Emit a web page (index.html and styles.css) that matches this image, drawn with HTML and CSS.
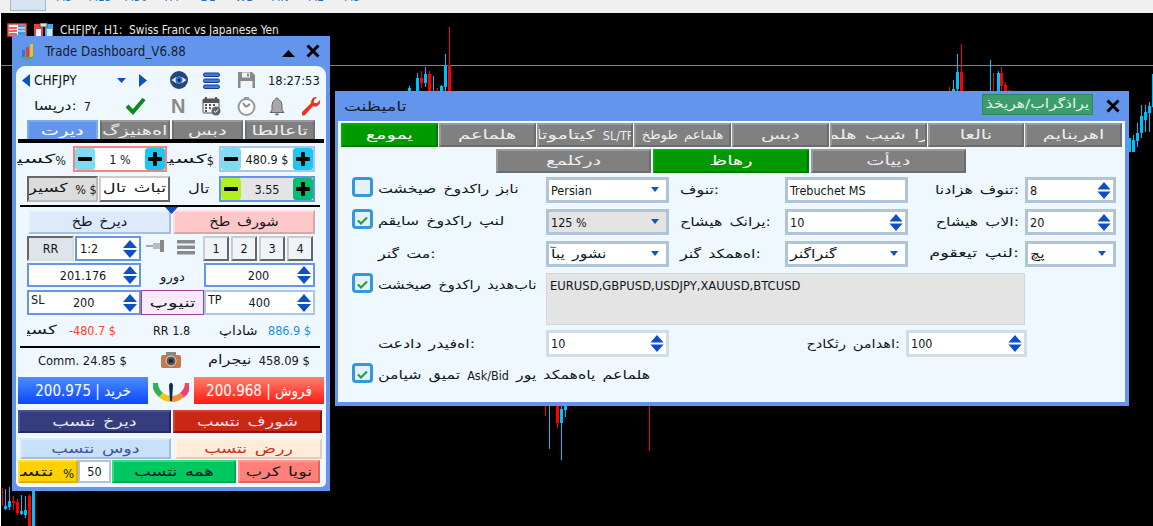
FILE: index.html
```html
<!DOCTYPE html>
<html lang="fa">
<head>
<meta charset="utf-8">
<title>Trade Dashboard</title>
<link rel="stylesheet" href="styles.css">
</head>
<body>
<svg class="defs" width="0" height="0">
  <symbol id="spin" viewBox="0 0 14 18"><path d="M7 0L14 8H0zM0 10H14L7 18z"/></symbol>
  <symbol id="minus" viewBox="0 0 20 22"><rect x="3" y="9" width="14" height="4" rx="1"/></symbol>
  <symbol id="plus" viewBox="0 0 20 22"><rect x="3" y="9" width="14" height="4" rx="1"/><rect x="8" y="4" width="4" height="14" rx="1"/></symbol>
  <symbol id="tick" viewBox="0 0 20 20"><path d="M4 10l4 4 8-8" fill="none" stroke="#2a9d3f" stroke-width="3"/></symbol>
</svg>
<div class="toolbar">
  <span class="tf active">H1</span><span class="tf">M5</span><span class="tf">M15</span><span class="tf">M30</span><span class="tf">H4</span><span class="tf">D1</span><span class="tf">W1</span><span class="tf">MN</span><span class="tf">M2</span><span class="tf">M3</span>
</div>
<main class="chart">
  <svg class="candles" width="1153" height="511" viewBox="0 15 1153 511">
    <rect x="1" y="65" width="1152" height="1" fill="#808080"/>
    <g fill="#00bfff">
      <rect x="409" y="86" width="1" height="5"/><rect x="408" y="88" width="3" height="3"/>
      <rect x="417" y="73" width="1" height="18"/><rect x="416" y="78" width="3" height="13"/>
      <rect x="425" y="67" width="1" height="20"/><rect x="424" y="74" width="3" height="9"/>
      <rect x="433" y="76" width="1" height="15"/>
      <rect x="441" y="85" width="1" height="6"/><rect x="440" y="86" width="3" height="5"/>
      <rect x="445" y="54" width="1" height="37"/><rect x="444" y="65" width="3" height="22"/>
      <rect x="953" y="80" width="1" height="11"/><rect x="952" y="89" width="3" height="2"/>
      <rect x="957" y="54" width="1" height="37"/><rect x="956" y="72" width="3" height="17"/>
      <rect x="990" y="60" width="1" height="31"/>
      <rect x="998" y="71" width="1" height="20"/><rect x="997" y="73" width="3" height="18"/>
      <rect x="1129" y="138" width="2" height="14"/>
      <rect x="1133" y="135" width="1" height="15"/><rect x="1132" y="140" width="3" height="12"/>
      <rect x="1137" y="123" width="1" height="24"/><rect x="1136" y="133" width="3" height="8"/>
      <rect x="1141" y="105" width="1" height="33"/><rect x="1140" y="116" width="3" height="17"/>
      <rect x="1145" y="105" width="1" height="27"/><rect x="1144" y="112" width="3" height="8"/>
      <rect x="1149" y="102" width="1" height="30"/><rect x="1148" y="106" width="3" height="7"/>
      <rect x="1152" y="74" width="1" height="33"/>
      <rect x="549" y="406" width="1" height="43"/>
      <rect x="561" y="406" width="1" height="54"/><rect x="560" y="409" width="3" height="14"/>
      <rect x="565" y="406" width="1" height="11"/><rect x="564" y="406" width="3" height="4"/>
      <rect x="5" y="489" width="1" height="21"/><rect x="4" y="506" width="3" height="3"/>
      <rect x="9" y="487" width="1" height="23"/><rect x="8" y="501" width="3" height="6"/>
      <rect x="21" y="495" width="1" height="20"/><rect x="20" y="511" width="3" height="3"/>
      <rect x="25" y="496" width="1" height="22"/><rect x="24" y="510" width="3" height="5"/>
      <rect x="32" y="491" width="3" height="35"/>
    </g>
    <g fill="#ff0000">
      <rect x="421" y="71" width="1" height="17"/><rect x="420" y="78" width="3" height="5"/>
      <rect x="429" y="71" width="1" height="20"/><rect x="428" y="74" width="3" height="17"/>
      <rect x="437" y="88" width="1" height="3"/>
      <rect x="449" y="27" width="1" height="64"/><rect x="448" y="65" width="3" height="26"/>
      <rect x="949" y="87" width="1" height="4"/>
      <rect x="961" y="44" width="1" height="47"/><rect x="960" y="72" width="3" height="19"/>
      <rect x="993" y="73" width="1" height="18"/>
      <rect x="1001" y="67" width="1" height="24"/><rect x="1000" y="73" width="3" height="13"/>
      <rect x="1005" y="82" width="1" height="9"/><rect x="1004" y="85" width="3" height="6"/>
      <rect x="1009" y="90" width="1" height="1"/>
      <rect x="545" y="406" width="1" height="10"/>
      <rect x="557" y="406" width="1" height="22"/><rect x="556" y="406" width="3" height="17"/>
      <rect x="649" y="406" width="1" height="45"/>
      <rect x="2" y="488" width="1" height="18"/>
      <rect x="13" y="496" width="1" height="14"/><rect x="12" y="501" width="3" height="2"/>
      <rect x="17" y="499" width="1" height="16"/><rect x="16" y="502" width="3" height="11"/>
      <rect x="29" y="494" width="1" height="32"/><rect x="28" y="496" width="3" height="30"/>
    </g>
  </svg>

  <div class="chart-title">
    <svg class="ct-icon" width="20" height="14" viewBox="0 0 20 14"><rect x="1" y="1" width="18" height="12" fill="#fff" stroke="#e04040" stroke-width="1.5"/><path d="M2 5h8M2 8h8M2 11h8" stroke="#f06060" stroke-width="2"/><rect x="11" y="2" width="7" height="10" fill="#3a9ae0"/><path d="M11 5h7M11 8h7" stroke="#fff"/></svg>
    <svg class="ct-icon" width="19" height="15" viewBox="0 0 19 15"><rect x="0" y="1" width="9" height="13" fill="#e84040"/><rect x="2" y="6" width="5" height="7" fill="#fff"/><rect x="11" y="1" width="8" height="13" fill="#4aa8e8"/><rect x="13" y="6" width="5" height="7" fill="#cfe8fa"/><rect x="6" y="0" width="7" height="4" fill="#ddd" stroke="#555"/></svg>
    <span class="ct-text">CHFJPY, H1:&nbsp; Swiss Franc vs Japanese Yen</span>
  </div>

  <section class="panel">
    <header class="p-head">
      <svg class="p-logo" width="20" height="18" viewBox="0 0 20 18"><rect x="4" y="8" width="3" height="7" fill="#3a70d0"/><rect x="8" y="5" width="3" height="10" fill="#e04030"/><rect x="12" y="2" width="3" height="13" fill="#f0c020"/><path d="M1 14q8 5 17-1q-6 6-12 4t-5-3z" fill="#40b040"/></svg>
      <span class="p-title">Trade Dashboard_V6.88</span>
      <svg class="p-min" width="13" height="7" viewBox="0 0 13 7"><path d="M6.500 0L13 7H0z"/></svg>
      <svg class="p-close" width="14" height="14" viewBox="0 0 14 14"><path d="M1.500 1.500l11 11M12.500 1.500l-11 11" stroke="#000" stroke-width="3"/></svg>
    </header>
    <div class="p-body">
      <div class="r-sym">
        <svg width="8" height="13" viewBox="0 0 8 13"><path d="M8 0V13L0 6.500z" fill="#0c50c8"/></svg>
        <span class="sym">CHFJPY</span>
        <svg width="9" height="5" viewBox="0 0 9 5"><path d="M0 0H9L4.500 5z" fill="#0c50c8"/></svg>
        <svg width="8" height="13" viewBox="0 0 8 13"><path d="M0 0V13L8 6.500z" fill="#0c50c8"/></svg>
        <svg width="18" height="18" viewBox="0 0 18 18"><circle cx="9" cy="9" r="9" fill="#27457a"/><path d="M1.500 9q7.500-7 15 0q-7.500 7-15 0z" fill="#dfe9f5"/><circle cx="9" cy="9" r="3.500" fill="#2a72c8"/><circle cx="9" cy="9" r="1.500" fill="#0a2040"/></svg>
        <svg width="17" height="17" viewBox="0 0 17 17"><g fill="#3a80d8" stroke="#1a3a90"><rect x=".5" y="1" width="16" height="3.500" rx="1.500"/><rect x=".5" y="7" width="16" height="3.500" rx="1.500"/><rect x=".5" y="13" width="16" height="3.500" rx="1.500"/></g></svg>
        <svg width="19" height="18" viewBox="0 0 19 18"><path d="M1 1H15L18 4V17H1z" fill="#8a8a8a"/><rect x="5" y="1.500" width="8" height="5" fill="#f0f4f8"/><rect x="10" y="2.500" width="2" height="3" fill="#8a8a8a"/><rect x="3.500" y="10" width="12" height="7" fill="#f0f4f8"/></svg>
        <span class="time">18:27:53</span>
      </div>
      <div class="r-tools">
        <span class="spread"><span class="fa">اسپرد: <span class="la">7</span></span></span>
        <svg width="21" height="18" viewBox="0 0 21 18"><path d="M2 9l6 6L19 2" fill="none" stroke="#0d8a1d" stroke-width="4"/></svg>
        <span class="n-icon">N</span>
        <svg width="19" height="19" viewBox="0 0 19 19"><rect x="1" y="2" width="16" height="14" rx="1" fill="#f4f4f4" stroke="#555"/><rect x="1" y="2" width="16" height="4" fill="#555"/><path d="M4 0v4M14 0v4" stroke="#555" stroke-width="2"/><path d="M3 8h2M7 8h2M11 8h2M3 11h2M7 11h2M3 14h2" stroke="#555" stroke-width="2"/><circle cx="14" cy="14" r="4.500" fill="#666"/><path d="M12 14l1.500 1.500 2.500-3" fill="none" stroke="#fff"/></svg>
        <svg width="19" height="19" viewBox="0 0 19 19"><circle cx="9.500" cy="10" r="8" fill="#fafafa" stroke="#999" stroke-width="2"/><path d="M9 10l-3-4M9 10l4-3" stroke="#888" stroke-width="2"/><path d="M7 0h5v2H7z" fill="#999"/></svg>
        <svg width="16" height="19" viewBox="0 0 16 19"><path d="M8 1q1.500 0 1.500 1.500Q13 4 13 8v5l2 2.500H1L3 13V8q0-4 3.500-5.500Q6.500 1 8 1z" fill="#a8a8a8" stroke="#666"/><path d="M6 16.500a2 2 0 0 0 4 0z" fill="#666"/></svg>
        <svg width="20" height="20" viewBox="0 0 20 20"><path d="M1 16L10 7Q10 2 14 1L16 1 13 4 13 7 16 7 19 4Q20 8 16 10 14 11 12 10L4 19Q2 20 1 19z" fill="#f03020"/></svg>
      </div>
      <div class="tabs">
        <div class="tab on"><span class="fa">ترید</span></div><div class="tab"><span class="fa">گزینه‌ها</span></div><div class="tab"><span class="fa">سبد</span></div><div class="tab"><span class="fa">اطلاعات</span></div>
      </div>
      <div class="rule thick"></div>
      <div class="r-risk">
        <div class="lbl-clip"><span class="fa">ریسک<span class="la">%</span></span></div>
        <div class="stepper red-b">
          <div class="pm c1"><svg width="20" height="22"><use href="#minus"/></svg></div><span class="val">1 %</span><div class="pm c2"><svg width="20" height="22"><use href="#plus"/></svg></div>
        </div>
        <div class="lbl-clip"><span class="fa">ریسک<span class="la">$</span></span></div>
        <div class="stepper light-b">
          <div class="pm c1"><svg width="20" height="22"><use href="#minus"/></svg></div><span class="val">480.9 $</span><div class="pm c2"><svg width="20" height="22"><use href="#plus"/></svg></div>
        </div>
      </div>
      <div class="r-lot">
        <div class="mode sunk"><span class="fa">ریسک <span class="la">% $</span></span></div>
        <div class="mode raised"><span class="fa">لات ثابت</span></div>
        <div class="lot-lbl"><span class="fa">لات</span></div>
        <div class="stepper blue-b gray">
          <div class="pm c3"><svg width="20" height="22"><use href="#minus"/></svg></div><span class="val">3.55</span><div class="pm c4"><svg width="20" height="22"><use href="#plus"/></svg></div>
        </div>
      </div>
      <div class="rule mid-rule"><svg class="notch" width="13" height="7" viewBox="0 0 13 7"><path d="M0 0H13L6.500 7z" fill="#0c50c8"/></svg></div>
      <div class="r-lines">
        <div class="line-b buy-l"><span class="fa">خط خرید</span></div>
        <div class="line-b sell-l"><span class="fa">خط فروش</span></div>
      </div>
      <div class="r-rr">
        <div class="rr-b">RR</div>
        <div class="spin blue-b"><span class="val-l">1:2</span><svg class="sa" width="14" height="18"><use href="#spin"/></svg></div>
        <svg class="pin" width="19" height="12" viewBox="0 0 19 12"><path d="M0 6h8" stroke="#aaa" stroke-width="2"/><path d="M7 3h7v6H7z" fill="#bbb"/><rect x="14" y="0" width="4" height="12" fill="#888"/></svg>
        <svg class="menu" width="18" height="15" viewBox="0 0 18 15"><rect width="18" height="3.500" fill="#8a8a8a"/><rect y="5.500" width="18" height="3.500" fill="#8a8a8a"/><rect y="11" width="18" height="3.500" fill="#8a8a8a"/></svg>
        <div class="nums"><div class="num">1</div><div class="num">2</div><div class="num">3</div><div class="num">4</div></div>
      </div>
      <div class="r-entry">
        <div class="spin blue-b"><span class="val-c">201.176</span><svg class="sa" width="14" height="18"><use href="#spin"/></svg></div>
        <div class="entry-lbl"><span class="fa">ورود</span></div>
        <div class="spin blue-b"><span class="val-c">200</span><svg class="sa" width="14" height="18"><use href="#spin"/></svg></div>
      </div>
      <div class="r-sltp">
        <div class="spin blue-b"><span class="tag">SL</span><span class="val-n">200</span><svg class="sa" width="14" height="18"><use href="#spin"/></svg></div>
        <div class="point"><span class="fa">پوینت</span></div>
        <div class="spin light-b"><span class="tag">TP</span><span class="val-n">400</span><svg class="sa" width="14" height="18"><use href="#spin"/></svg></div>
      </div>
      <div class="r-sum">
        <div class="sum-risk"><span class="fa">ریسک</span></div>
        <span class="loss">-480.7 $</span>
        <span>RR 1.8</span>
        <span class="fa">پاداش</span>
        <span class="gain">886.9 $</span>
      </div>
      <div class="rule mid-rule low"></div>
      <div class="r-comm">
        <span>Comm. 24.85 $</span>
        <svg width="20" height="16" viewBox="0 0 20 16"><rect y="3" width="20" height="13" rx="2" fill="#c87848"/><rect x="5" y="0" width="10" height="4" fill="#888"/><circle cx="10" cy="9" r="5" fill="#555" stroke="#ddd"/><circle cx="10" cy="9" r="2" fill="#222"/></svg>
        <span class="fa">مارجین <span class="la">458.09 $</span></span>
      </div>
      <div class="r-trade">
        <div class="trade buy" dir="rtl">خرید | 200.975</div>
        <svg class="gauge" width="36" height="22" viewBox="0 0 36 22"><path d="M2 3A16 16 0 0 0 8 15" fill="none" stroke="#35b050" stroke-width="6"/><path d="M8 15A16 16 0 0 0 18 19" fill="none" stroke="#ecc818" stroke-width="6"/><path d="M18 19A16 16 0 0 0 29 15" fill="none" stroke="#f09030" stroke-width="6"/><path d="M29 15A16 16 0 0 0 35 3" fill="none" stroke="#f04070" stroke-width="6"/><path d="M16 5q2-5 4 0l-1 16h-2z" fill="#0c2a50"/></svg>
        <div class="trade sell" dir="rtl">فروش | 200.968</div>
      </div>
      <div class="r-close1">
        <div class="cl navy"><span class="fa">بستن خرید</span></div>
        <div class="cl crim"><span class="fa">بستن فروش</span></div>
      </div>
      <div class="r-close2">
        <div class="cl sky"><span class="fa">بستن سود</span></div>
        <div class="cl peach"><span class="fa">بستن ضرر</span></div>
      </div>
      <div class="r-close3">
        <div class="cl gold"><span class="fa">بستن <span class="la">%</span></span></div>
        <div class="pct">50</div>
        <div class="cl green"><span class="fa">بستن همه</span></div>
        <div class="cl salmon"><span class="fa">برک ایون</span></div>
      </div>
    </div>
  </section>

  <section class="settings">
    <header class="s-head">
      <span class="s-title fa">تنظیمات</span>
      <div class="s-save"><span class="fa">ذخیره/بارگذاری</span></div>
      <svg class="s-close" width="14" height="14" viewBox="0 0 14 14"><path d="M1.500 1.500l11 11M12.500 1.500l-11 11" stroke="#000" stroke-width="3"/></svg>
    </header>
    <div class="s-body">
      <div class="s-tabs8">
        <div class="stab on"><span class="fa">عمومی</span></div>
        <div class="stab"><span class="fa">معامله</span></div>
        <div class="stab"><span class="fa">اتوماتیک <span class="la">SL/TP</span></span></div>
        <div class="stab"><span class="fa tight">خطوط معامله</span></div>
        <div class="stab"><span class="fa">سبد</span></div>
        <div class="stab"><span class="fa">معامله بیش از حد</span></div>
        <div class="stab"><span class="fa">اعلان</span></div>
        <div class="stab"><span class="fa">میانبرها</span></div>
      </div>
      <div class="s-tabs3">
        <div class="stab"><span class="fa">عملکرد</span></div>
        <div class="stab on"><span class="fa">ظاهر</span></div>
        <div class="stab"><span class="fa">تأیید</span></div>
      </div>
      <div class="f-row">
        <label class="chk"><span class="box"></span><span class="fa">تشخیص خودکار زبان</span></label>
        <div class="ctl sel">Persian<i class="arr"></i></div>
        <div class="l2"><span class="fa">فونت:</span></div>
        <div class="ctl">Trebuchet MS</div>
        <div class="l3"><span class="fa">اندازه فونت:</span></div>
        <div class="ctl sp">8<svg class="sa2" width="14" height="17"><use href="#spin"/></svg></div>
      </div>
      <div class="f-row">
        <label class="chk"><span class="box"><svg width="17" height="17"><use href="#tick"/></svg></span><span class="fa">مقیاس خودکار پنل</span></label>
        <div class="ctl sel dis">125 %<i class="arr"></i></div>
        <div class="l2"><span class="fa">حاشیه کناری:</span></div>
        <div class="ctl sp">10<svg class="sa2" width="14" height="17"><use href="#spin"/></svg></div>
        <div class="l3"><span class="fa">حاشیه بالا:</span></div>
        <div class="ctl sp">20<svg class="sa2" width="14" height="17"><use href="#spin"/></svg></div>
      </div>
      <div class="f-row">
        <div class="plain"><span class="fa">رنگ تم:</span></div>
        <div class="ctl sel"><span class="fa">آبی روشن</span><i class="arr"></i></div>
        <div class="l2"><span class="fa">رنگ دکمه‌ها:</span></div>
        <div class="ctl sel"><span class="fa">رنگارنگ</span><i class="arr"></i></div>
        <div class="l3"><span class="fa wide">موقعیت پنل:</span></div>
        <div class="ctl sel"><span class="fa">چپ</span><i class="arr"></i></div>
      </div>
      <div class="f-row tall">
        <label class="chk"><span class="box"><svg width="17" height="17"><use href="#tick"/></svg></span><span class="fa narrow">تشخیص خودکار دیده‌بان</span></label>
        <div class="area">EURUSD,GBPUSD,USDJPY,XAUUSD,BTCUSD</div>
      </div>
      <div class="f-row2">
        <div class="plain"><span class="fa">تعداد ردیف‌ها:</span></div>
        <div class="ctl sp soft">10<svg class="sa2" width="14" height="17"><use href="#spin"/></svg></div>
        <div class="l4"><span class="fa narrow">حداکثر نمادها:</span></div>
        <div class="ctl sp soft">100<svg class="sa2" width="14" height="17"><use href="#spin"/></svg></div>
      </div>
      <label class="chk last"><span class="box"><svg width="17" height="17"><use href="#tick"/></svg></span><span class="fa">نمایش قیمت <span class="la">Ask/Bid</span> روی دکمه‌های معامله</span></label>
    </div>
  </section>
</main>
</body>
</html>
```
FILE: styles.css
```css
* { box-sizing: border-box; }
html, body { margin: 0; height: 100%; }
body {
  width: 1153px; height: 526px; overflow: hidden; background: #000;
  font-family: "DejaVu Sans Condensed", "DejaVu Sans", sans-serif;
  font-size: 12px; color: #101820;
  display: flex; flex-direction: column;
}
/* The source draws Persian strictly left-to-right with wide, low letters. */
.fa {
  --s: 1.27;
  direction: ltr; unicode-bidi: bidi-override; white-space: nowrap; flex: none;
  font-family: "DejaVu Sans", sans-serif; line-height: 1.2; word-spacing: 2px;
  font-size: calc(1em * var(--s));
  transform: scaleY(calc(1 / var(--s)));
}
.la {
  display: inline-block; word-spacing: 0;
  font-family: "DejaVu Sans Condensed", "DejaVu Sans", sans-serif;
  font-size: calc(1em / var(--s));
  transform: scaleY(var(--s));
}
.fa.wide { --s: 1.42; }
.fa.narrow { --s: 1.17; }
.defs { position: absolute; }

.toolbar { height: 13px; flex: none; background: #f0f0f0; display: flex; padding-left: 10px; overflow: hidden; }
.tf { width: 36px; height: 11px; display: flex; align-items: flex-end; justify-content: center; color: #1e70c0; font-size: 12px; line-height: 1; padding-bottom: 8px; }
.tf.active { background: #d6e4f2; border: solid #a8b8c8; border-width: 0 1px 1px; }

.chart { position: relative; flex: 1; background: #000; border-left: 1px solid #fff; }
.candles { position: absolute; left: -1px; top: 2px; }
.chart-title { position: absolute; left: 6px; top: 10px; height: 14px; display: flex; align-items: center; gap: 7px; color: #e8e8e8; }
.ct-text { white-space: nowrap; font-size: 11.800px; }

/* Trade panel */
.panel { position: absolute; left: 11px; top: 23px; width: 318px; height: 455px; background: #6495ed; padding: 0 4px 4px; display: flex; flex-direction: column; }
.p-head { height: 30px; flex: none; display: flex; align-items: center; padding: 0 6px 0 2px; }
.p-logo { margin-top: -1px; }
.p-title { margin-left: 7px; font-size: 13.200px; color: #14202c; white-space: nowrap; }
.p-min { margin-left: auto; margin-top: 4px; }
.p-close { margin-left: 11px; }
.p-body { flex: 1; background: #f0f8ff; border-radius: 9px 9px 5px 5px; position: relative; display: flex; flex-direction: column; }

.r-sym { height: 24px; margin-top: 2px; padding-left: 6px; display: grid; grid-template-columns: 12px 83px 22px 31px 33px 34px 31px auto; align-items: center; }
.sym { font-size: 13.500px; }
.time { font-size: 12.800px; white-space: nowrap; }
.r-tools { height: 24px; margin-top: 2px; padding-left: 18px; display: grid; grid-template-columns: 91px 46px 31px 35px 32px 32px auto; align-items: center; }
.spread { font-size: 12.500px; display: flex; }
.spread .fa { --s: 1.25; }
.n-icon { font: bold 20px "Liberation Sans", sans-serif; color: #8a8a8a; }

.tabs { height: 19px; margin: 2px 0 0 11px; width: 288px; display: grid; grid-template-columns: repeat(4, 1fr); gap: 2px; }
.tab { display: flex; align-items: center; justify-content: center; background: #808080; color: #eee; border: 2px solid #6f6f6f; border-top-color: #9a9a9a; border-bottom: 0; overflow: hidden; font-size: 12.500px; }
.tab .fa, .stab .fa { --s: 1.55; }
.stab .fa.tight { --s: 1.05; }
.tab.on { background: #6495ed; border-color: #7ea8f4; color: #fff; }
.rule { background: #000; }
.thick { height: 4px; margin: 0 2px; }

.r-risk { height: 26px; margin: 3px 0 0 1px; display: grid; grid-template-columns: 56px 94px 52px 96px; }
.lbl-clip { overflow: hidden; display: flex; justify-content: flex-end; align-items: center; padding-right: 7px; font-size: 12.500px; }
.lbl-clip + .stepper + .lbl-clip { padding-right: 5px; }
.lbl-clip .fa { --s: 1.85; }
.stepper { display: flex; align-items: center; justify-content: space-between; background: #fff; padding: 0; }
.red-b { border: 2px solid #ff8080; }
.light-b { border: 2px solid #a8c4f4; }
.blue-b { border: 2px solid #6495ed; }
.gray { background: #e4e4e4; }
.pm { width: 20px; height: 22px; border-radius: 3px; flex: none; display: flex; }
.pm svg { fill: #000; }
.c1 { background: #7fdcef; }
.c2 { background: #17c8f2; }
.c3 { background: #b4f020; }
.c4 { background: #00bf6f; }
.val { font-size: 12.500px; white-space: nowrap; }

.r-lot { height: 25px; margin: 4px 0 0 11px; display: grid; grid-template-columns: 72px 71px 49px 96px; }
.mode { overflow: hidden; display: flex; align-items: center; justify-content: center; font-size: 12.500px; }
.mode .fa { --s: 1.42; }
.lot-lbl .fa { --s: 1.3; }
.sunk { background: #dcdcdc; border: 2px solid; border-color: #666 #bbb #bbb #666; margin-right: 1px; }
.raised { background: #fff; border: 2px solid; border-color: #ccc #666 #666 #ccc; }
.lot-lbl { display: flex; align-items: center; padding-left: 18px; font-size: 12.500px; }
.mid-rule { height: 2px; margin: 4px 6px 0 4px; position: relative; }
.notch { position: absolute; left: 145px; top: 2px; z-index: 1; }
.low { margin-top: 6px; }

.r-lines { height: 24px; margin: 3px 0 0 12px; display: grid; grid-template-columns: 143px 142px; gap: 2px; }
.line-b { display: flex; align-items: center; justify-content: center; border: 2px solid; font-size: 13px; }
.line-b .fa { --s: 1.12; }
.buy-l { background: #ddeafb; border-color: #e8f2fd #a8c0dc #a8c0dc #e8f2fd; }
.sell-l { background: #ffc8c8; border-color: #ffdede #d8a8a8 #d8a8a8 #ffdede; }

.r-rr { height: 25px; margin: 2px 0 0 11px; display: grid; grid-template-columns: 48px 66px 36px 26px auto; align-items: stretch; }
.rr-b { width: 47px; background: #dde4ea; border: 2px solid; border-color: #666 #ddd #ddd #666; display: flex; align-items: center; justify-content: center; font-size: 12.500px; }
.spin { display: flex; align-items: center; background: #fff; font-size: 12.500px; }
.sa { flex: none; fill: #0c50c8; margin: 0 2px 0 auto; }
.val-l { padding-left: 3px; }
.val-c { flex: 1; text-align: center; padding-left: 14px; }
.val-n { flex: 1; text-align: center; }
.tag { align-self: flex-start; padding-left: 2px; }
.pin { align-self: center; margin: -6px 0 0 5px; }
.menu { align-self: center; margin-top: -2px; }
.nums { display: flex; gap: 2px; }
.num { width: 26px; background: #f0f4f8; display: flex; align-items: center; justify-content: center; border: 2px solid; border-color: #ccc #666 #666 #ccc; font-size: 12.500px; }

.r-entry, .r-sltp { height: 24px; margin: 2px 0 0 11px; display: grid; grid-template-columns: 114px 63px 111px; }
.r-sltp { height: 25px; margin-top: 3px; }
.entry-lbl { display: flex; align-items: flex-end; justify-content: center; padding-bottom: 2px; font-size: 12.500px; }
.entry-lbl .fa { --s: 1.05; }
.point { background: #f8eaf8; border: 1px solid #a040a0; display: flex; align-items: center; justify-content: center; font-size: 12.500px; overflow: hidden; }
.point .fa { --s: 1.58; }

.r-sum { height: 20px; margin: 5px 0 0 11px; display: grid; grid-template-columns: 30px 96px 66px 49px auto; align-items: center; font-size: 12.500px; white-space: nowrap; }
.r-sum .fa { --s: 1.1; }
.r-sum .sum-risk .fa { --s: 1.5; }
.sum-risk { overflow: hidden; display: flex; justify-content: flex-end; }
.loss { color: #ff4020; padding-left: 12px; }
.gain { color: #2090f0; }

.r-comm { height: 20px; margin: 2px 0 0 22px; display: grid; grid-template-columns: 123px 47px auto; align-items: center; font-size: 12.800px; white-space: nowrap; }
.r-comm .fa { --s: 1.27; }
.r-trade { height: 27px; margin: 7px 0 0 2px; display: grid; grid-template-columns: 130px 46px 130px; }
.trade { color: #fff; font-size: 15px; display: flex; align-items: center; justify-content: center; white-space: nowrap; }
.buy { background: linear-gradient(#4d8cff, #0a48ff); }
.sell { background: linear-gradient(#ff8070, #ff1a10); }
.gauge { margin: 3px 0 0 5px; }

.cl { display: flex; align-items: center; justify-content: center; border: 2px solid; overflow: hidden; white-space: nowrap; font-size: 13px; }
.cl .fa { --s: 1.35; }
.gold .fa { --s: 1.7; }
.r-close1 { height: 23px; margin: 6px 0 0 2px; display: grid; grid-template-columns: 153px 149px; gap: 2px; }
.r-close2 { height: 21px; margin: 5px 0 0 4px; display: grid; grid-template-columns: 151px 147px; gap: 4px; }
.r-close3 { height: 23px; margin: 1px 0 0 2px; display: grid; grid-template-columns: 60px 33px 125px 84px; }
.navy { background: #353d7f; color: #e8ecf8; border-color: #4a5290 #1e2a6a #1e2a6a #4a5290; }
.crim { background: #c82814; color: #fde; border-color: #d84030 #8e1006 #8e1006 #d84030; }
.sky { background: #c8e0fa; color: #4050a0; border-color: #d8eafc #a8bed8 #a8bed8 #d8eafc; }
.peach { background: #fdecd8; color: #c83020; border-color: #fff4e8 #e0cdb8 #e0cdb8 #fff4e8; }
.gold { background: #ffd000; border-color: #ffdc40 #e0b000 #e0b000 #ffdc40; justify-content: flex-end; padding-right: 2px; }
.pct { background: #fff; border: 2px solid #b0c4d8; display: flex; align-items: center; justify-content: center; font-size: 12.500px; }
.green { background: #00c860; border-color: #30e080 #00a850 #00a850 #30e080; margin-left: 1px; }
.salmon { background: #ff8078; border-color: #ff9890 #d86860 #d86860 #ff9890; margin-left: 2px; }

/* Settings window */
.settings { position: absolute; left: 334px; top: 78px; width: 794px; height: 315px; background: #6495ed; padding: 0 4px 4px 3px; display: flex; flex-direction: column; }
.s-head { height: 30px; flex: none; display: flex; align-items: center; padding-left: 6px; }
.s-head .s-title { --s: 1.32; font-size: 17.800px; margin-top: 1px; color: #14202c; }
.s-save { margin-left: auto; width: 111px; height: 21px; margin-top: -3px; background: #3c9c6c; border: 1px solid #2a8a5c; color: #e8f4ec; overflow: hidden; display: flex; align-items: center; justify-content: center; font-size: 12.500px; }
.s-save .fa { --s: 1.24; }
.s-close { margin: -1px 5px 0 13px; }
.s-body { flex: 1; background: #f0f8ff; border-top: 1px solid #fff; }
.s-tabs8 { height: 24px; margin: 1px 0 0 3px; width: 781px; display: grid; grid-template-columns: repeat(8, 1fr); gap: 1px; }
.s-tabs3 { height: 24px; margin: 2px 0 0 158px; width: 470px; display: grid; grid-template-columns: repeat(3, 1fr); gap: 2px; }
.stab { background: #808080; color: #eee; border: 2px solid #6c6c6c; border-top-color: #9a9a9a; border-left-color: #9a9a9a; display: flex; align-items: center; justify-content: center; overflow: hidden; font-size: 12.500px; }
.stab.on { background: #009900; color: #fff; border-color: #00b000 #007a00 #007a00 #00b000; }

.f-row { display: grid; grid-template-columns: 194px 123px 116px 123px 117px 91px; height: 26px; margin: 6px 0 0 14px; font-size: 12.500px; align-items: stretch; }
.s-tabs3 + .f-row { margin-top: 4px; }
.f-row.tall { height: 52px; }
.f-row2 { display: grid; grid-template-columns: 194px 123px 237px 121px; height: 27px; margin: 5px 0 0 14px; font-size: 12.500px; }
.chk { display: flex; align-items: flex-start; gap: 5px; white-space: nowrap; font-size: 12.500px; }
.chk .fa { height: 24px; line-height: 24px; }
.box { width: 21px; height: 20px; flex: none; border: 3px solid #3498db; border-radius: 4px; background: #e3f1fb; display: flex; }
.chk.last { margin: 6px 0 0 14px; }
.plain { display: flex; align-items: center; padding-left: 26px; }
.ctl { border: 3px solid #b0c4d8; background: #fff; padding-left: 2px; display: flex; align-items: center; position: relative; white-space: nowrap; }
.dis { background: #e4e4e4; }
.soft { border-color: #d0dce8; }
.sp { justify-content: space-between; }
.sa2 { fill: #0c50c8; margin-right: 2px; }
.arr { position: absolute; right: 7px; top: 7px; border: solid transparent; border-width: 5px 4.500px 0; border-top-color: #1450c8; }
.l2 { display: flex; align-items: center; padding-left: 11px; }
.l3, .l4 { display: flex; align-items: center; justify-content: flex-end; padding-right: 6px; }
.area { grid-column: 2 / 6; background: #e4e4e4; border: 1px solid #cfd8e0; padding: 4px 3px; font-size: 12.900px; }
```
